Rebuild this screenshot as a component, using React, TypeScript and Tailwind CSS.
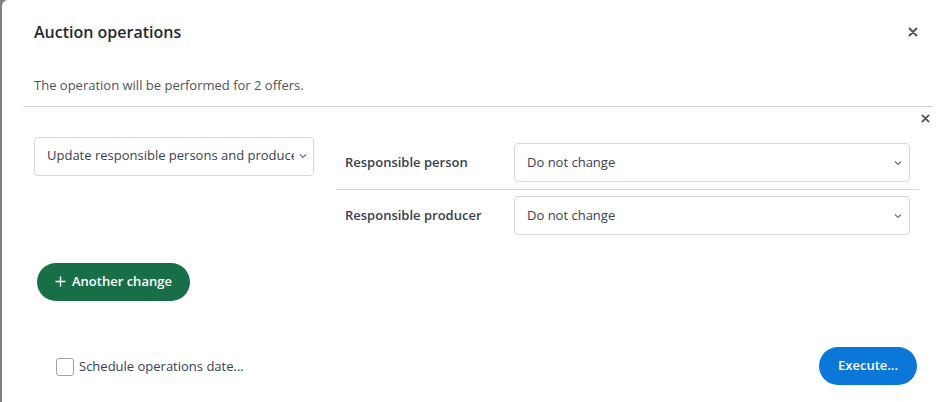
import { useState } from "react";

const font = { fontFamily: '"Open Sans", "Noto Sans", sans-serif' };

const Chevron = () => (
  <svg width="10" height="10" viewBox="0 0 10 10" className="shrink-0 text-[#6b7280]">
    <path d="M2 3.5 L5 6.5 L8 3.5" fill="none" stroke="currentColor" strokeWidth="1.2" />
  </svg>
);

const CloseIcon = ({ size }: { size: number }) => (
  <svg width={size} height={size} viewBox="0 0 10 10" className="text-[#4b5563]">
    <path d="M1.5 1.5 L8.5 8.5 M8.5 1.5 L1.5 8.5" stroke="currentColor" strokeWidth="2" strokeLinecap="round" />
  </svg>
);

type SelectBoxProps = {
  value: string;
  className: string;
};

const SelectBox = ({ value, className }: SelectBoxProps) => (
  <div className={`flex items-center border border-[#d5d8de] rounded-[4px] bg-white text-[13px] text-[#374151] ${className}`}>
    <span className="flex-1 whitespace-nowrap overflow-hidden">{value}</span>
    <Chevron />
  </div>
);

type FieldRowProps = {
  label: string;
};

const FieldRow = ({ label }: FieldRowProps) => (
  <div className="flex items-center h-[52px] pl-[9px]">
    <span className="w-[169px] text-[13px] font-semibold text-[#374151]">{label}</span>
    <SelectBox value="Do not change" className="w-[396px] h-[39px] pl-3 pr-[6px]" />
  </div>
);

const App = () => {
  const [scheduled, setScheduled] = useState(false);

  return (
    <div className="w-full h-screen bg-[#7f7f7f] overflow-hidden pl-[2px]" style={font}>
      <div className="w-full h-full bg-white rounded-tl-[6px]">
        <div className="flex items-center justify-between pl-[32px] pr-[33px] pt-[20px]">
          <h1 className="text-[16px] font-semibold text-[#1f2937]">Auction operations</h1>
          <CloseIcon size={10} />
        </div>

        <p className="pl-[32px] mt-[32px] text-[13px] text-[#4b5563]">The operation will be performed for 2 offers.</p>

        <div className="ml-[21px] mr-[18px] mt-[10px] border-t border-[#d1d5db]"></div>

        <div className="flex justify-end pr-[21px] pt-[7px]">
          <CloseIcon size={9} />
        </div>

        <div className="flex items-start pl-[32px] mt-[14px]">
          <SelectBox value="Update responsible persons and produce" className="w-[280px] h-[39px] pl-3 pr-[5px] gap-1" />
          <div className="ml-[22px] w-[583px]">
            <FieldRow label="Responsible person" />
            <div className="border-t border-[#d1d5db]"></div>
            <FieldRow label="Responsible producer" />
          </div>
        </div>

        <button className="ml-[35px] mt-[21px] h-[38px] px-[18px] rounded-full bg-[#186f47] text-white text-[13px] font-semibold flex items-center gap-[6px]">
          <svg width="11" height="11" viewBox="0 0 11 11">
            <path d="M5.5 0.5 V10.5 M0.5 5.5 H10.5" stroke="currentColor" strokeWidth="1.4" />
          </svg>
          Another change
        </button>

        <div className="flex items-center justify-between pl-[54px] pr-[34px] mt-[46px]">
          <label className="flex items-center gap-[5px] mt-[3px] text-[13px] text-[#374151]">
            <input
              type="checkbox"
              checked={scheduled}
              onChange={() => setScheduled(!scheduled)}
              className="appearance-none w-[18px] h-[18px] rounded-[3px] border border-[#9ca3af] bg-white"
            />
            Schedule operations date...
          </label>
          <button className="h-[38px] w-[98px] rounded-full bg-[#0b77d9] text-white text-[13px] font-semibold">Execute...</button>
        </div>
      </div>
    </div>
  );
};

export default App;
